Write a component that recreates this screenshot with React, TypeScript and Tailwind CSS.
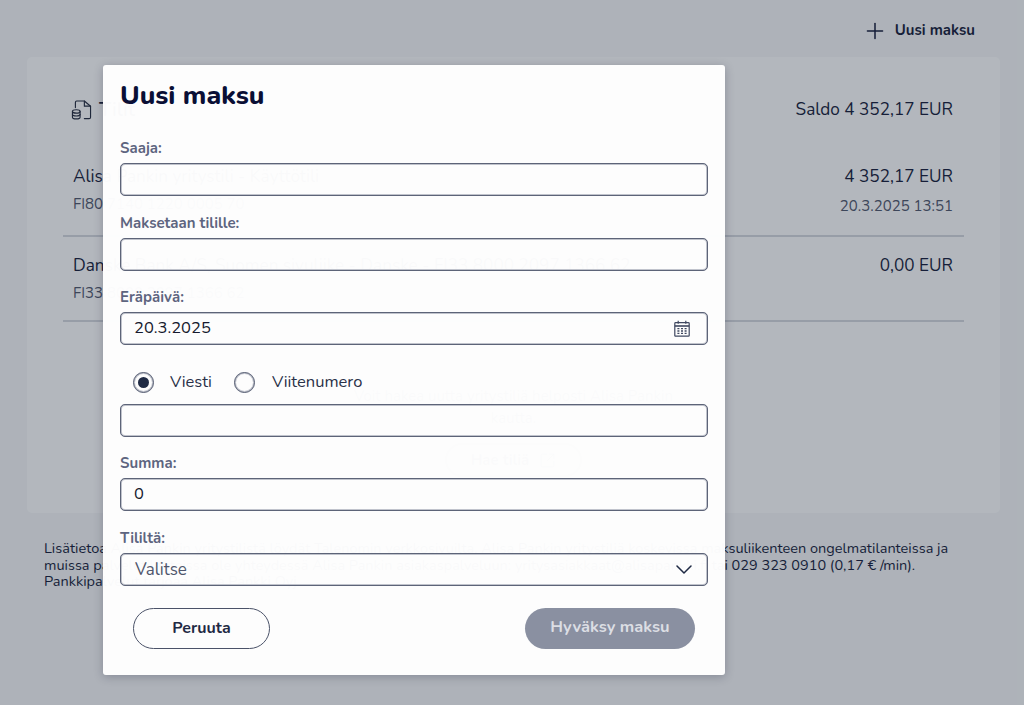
import { Plus, SquareArrowOutUpRight } from "lucide-react";

const FONT = "font-['Nunito','Noto_Sans','Open_Sans',sans-serif]";

const ACCOUNTS = [
  {
    name: "Alisa Pankin yritystili - Käyttötili",
    iban: "FI80 7140 1220 0005 70",
    amount: "4 352,17 EUR",
    date: "20.3.2025 13:51",
  },
  {
    name: "Danske Bank A/S, Suomen sivuliike - Danske - FI33 8000 2097 1366 62",
    iban: "FI33 8000 2097 1366 62",
    amount: "0,00 EUR",
    date: "",
  },
];

const FileDbIcon = () => (
  <svg width="21" height="20" viewBox="0 0 22 21" fill="none" stroke="#1d2438" strokeWidth="1.2" strokeLinecap="round" strokeLinejoin="round">
    <path d="M4.6 8V2.5A1.5 1.5 0 0 1 6 1h8l6.5 5.5v11.5a1.5 1.5 0 0 1-1.5 1.5h-5" />
    <path d="M14 1v5.5h6.5" />
    <ellipse cx="5.5" cy="12" rx="4" ry="1.8" />
    <path d="M1.5 12v6c0 1 1.8 1.8 4 1.8s4-.8 4-1.8v-6" />
    <path d="M1.5 15c0 1 1.8 1.8 4 1.8s4-.8 4-1.8" />
  </svg>
);

const CalendarIcon = () => (
  <svg width="16" height="17" viewBox="0 0 16 17" fill="none" stroke="#3f4860" strokeWidth="1.2">
    <rect x="0.8" y="2.6" width="14.4" height="13.6" rx="0.8" />
    <path d="M0.8 6h14.4" strokeWidth="1.6" />
    <path d="M4.2 0.8v3M11.8 0.8v3" />
    <path d="M3.4 8.6h2M7 8.6h2M10.6 8.6h2M3.4 11h2M7 11h2M10.6 11h2M3.4 13.4h2M7 13.4h2M10.6 13.4h2" strokeWidth="1.4" />
  </svg>
);

const Chevron = () => (
  <svg width="16" height="9" viewBox="0 0 16 9" fill="none" stroke="#1f2a44" strokeWidth="1.5" strokeLinecap="round" strokeLinejoin="round">
    <path d="M1 1l7 7 7-7" />
  </svg>
);

const Field = ({ label, children }: { label?: string; children: React.ReactNode }) => (
  <div className="flex flex-col">
    {label && <label className="pt-[1px] mb-[5px] text-[15px] leading-[19px] font-bold text-[#5e6580]">{label}</label>}
    {children}
  </div>
);

const boxCls =
  "h-[33px] w-full rounded-[5px] border-2 border-[#c0c3cc] outline outline-1 -outline-offset-1 outline-[#5d6478] flex items-center justify-between";

const radioCls =
  "w-[21px] h-[21px] rounded-full border-2 border-[#c0c3cc] outline outline-1 -outline-offset-1 outline-[#5d6478] flex items-center justify-center";

export default function App() {
  return (
    <div className={`relative h-[705px] w-[1024px] overflow-hidden bg-[#f7f8f9] text-[#0e1434] ${FONT}`}>
      <div className="pl-[40px] pr-[49px] pt-[22px]">
        <div className="flex items-center justify-end gap-[7px] h-[17px]">
          <Plus className="w-[26px] h-[26px]" strokeWidth={1.4} />
          <span className="text-[15px] font-bold">Uusi maksu</span>
        </div>
      </div>

      <div className="ml-[27px] mr-[24px] mt-[18px] h-[456px] rounded-[5px] bg-white pl-[36px] pr-[36px] pt-[38px]">
        <div className="flex items-center justify-between pl-[9px] pr-[11px] h-[30px]">
          <div className="flex items-center gap-[7px] -ml-[1px]">
            <FileDbIcon />
            <span className="text-[20px] font-semibold">Tilit</span>
          </div>
          <span className="text-[17.2px]">Saldo 4 352,17 EUR</span>
        </div>

        <div className="mt-[40px]">
          {ACCOUNTS.map((a, i) => (
            <div key={a.iban} className={`border-b-2 border-[#d4d7dd] pl-[10px] pr-[11px] flex justify-between ${i === 0 ? "h-[72px]" : "h-[85px] pt-[17px]"}`}>
              <div>
                <div className="text-[17.2px] leading-[24px]">{a.name}</div>
                <div className="text-[15px] leading-[20px] mt-[5px] text-[#4b5268]">{a.iban}</div>
              </div>
              <div className="text-right">
                <div className="text-[17.2px] leading-[24px]">{a.amount}</div>
                {a.date && <div className="text-[15px] leading-[20px] mt-[7px] text-[#4b5268]">{a.date}</div>}
              </div>
            </div>
          ))}
        </div>

        <div className="flex flex-col items-center mt-[63px]">
          <p className="w-[340px] text-center text-[15px] leading-[22px] text-[#4b5268]">
            Voit hakea uutta yritystiliä helposti Alisa Pankin kautta.
          </p>
          <button className="mt-[14px] h-[34px] w-[137px] rounded-full border-2 border-[#9ea3ae] flex items-center justify-center gap-[10px] text-[15px] font-bold text-[#4b5268]">
            Hae tiliä
            <SquareArrowOutUpRight className="w-[17px] h-[17px]" strokeWidth={1.25} />
          </button>
        </div>
      </div>

      <p className="mx-[44px] mt-[27px] text-[14.5px] leading-[16.5px] whitespace-nowrap">
        Lisätietoa Alisa Pankin yritystilistä löydät Talenomin verkkosivuilta. Alisa Pankin yritystiliä koskevissa maksuliikenteen ongelmatilanteissa ja
        <br />
        muissa palvelutilanteissa ole yhteydessä Alisa Pankin asiakaspalveluun: yritysasiakkaat@alisapankki.fi tai 029 323 0910 (0,17 € /min).
        <br />
        Pankkipalvelut tarjoaa Alisa Pankki Oyj.
      </p>

      {/* overlay */}
      <div className="absolute inset-0 bg-[rgba(38,50,66,0.35)]" />

      {/* modal */}
      <div className="absolute left-[103px] top-[65px] w-[622px] h-[610px] rounded-[3px] bg-white/[0.975] shadow-[0_2px_10px_rgba(20,25,50,0.25)] px-[17px]">
        <h2 className="mt-[14px] text-[26.5px] leading-[33px] font-extrabold text-[#0a0f35]">Uusi maksu</h2>

        <div className="mt-[26px] flex flex-col gap-[16.5px]">
          <Field label="Saaja:">
            <div className={boxCls} />
          </Field>
          <Field label="Maksetaan tilille:">
            <div className={boxCls} />
          </Field>
          <Field label="Eräpäivä:">
            <div className={`${boxCls} pl-[12px] pr-[16px]`}>
              <span className="text-[16.5px] text-[#161a2e]">20.3.2025</span>
              <CalendarIcon />
            </div>
          </Field>
        </div>

        <div className="mt-[26px] flex items-center h-[22px] pl-[13px]">
          <span className={radioCls}>
            <span className="w-[11px] h-[11px] rounded-full bg-[#1f2a44]" />
          </span>
          <span className="ml-[16px] text-[16.5px] text-[#2a3148]">Viesti</span>
          <span className={`ml-[22px] ${radioCls}`} />
          <span className="ml-[17px] text-[16.5px] text-[#2a3148]">Viitenumero</span>
        </div>

        <div className="mt-[11px]">
          <div className={boxCls} />
        </div>

        <div className="mt-[15.5px] flex flex-col gap-[17px]">
          <Field label="Summa:">
            <div className={`${boxCls} pl-[12px]`}>
              <span className="text-[16.5px] text-[#161a2e]">0</span>
            </div>
          </Field>
          <Field label="Tililtä:">
            <div className={`${boxCls} pl-[13px] pr-[14px]`}>
              <span className="pt-[1px] text-[17px] text-[#4f566c]">Valitse</span>
              <Chevron />
            </div>
          </Field>
        </div>

        <div className="mt-[22px] flex justify-between pl-[13px] pr-[13px]">
          <button className="h-[41px] w-[137px] pb-[1px] rounded-full border-[1.5px] border-[#4a5268] text-[16px] font-bold text-[#1f2a44]">
            Peruuta
          </button>
          <button className="h-[41px] w-[170px] pb-[1px] rounded-full bg-[#8a90a1] text-[16.5px] font-bold text-[#dcdee4]">
            Hyväksy maksu
          </button>
        </div>
      </div>
    </div>
  );
}
